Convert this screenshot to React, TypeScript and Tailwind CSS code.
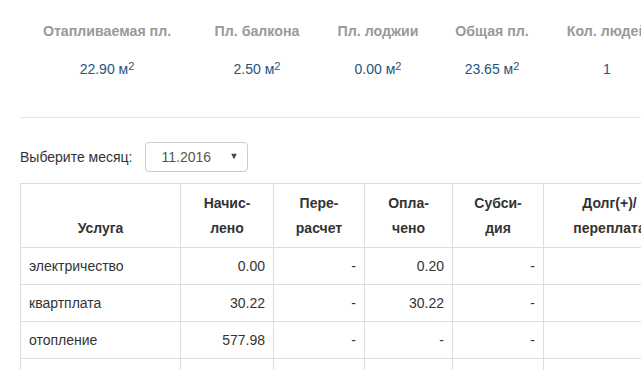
import React from "react";

export default function App() {
  const stats = [
    { label: "Отапливаемая пл.", value: "22.90", unit: true, w: "w-[174px]" },
    { label: "Пл. балкона", value: "2.50", unit: true, w: "w-[126px]" },
    { label: "Пл. лоджии", value: "0.00", unit: true, w: "w-[116px]" },
    { label: "Общая пл.", value: "23.65", unit: true, w: "w-[112px]" },
    { label: "Кол. людей", value: "1", unit: false, w: "w-[118px]" },
  ];

  const rows = [
    ["электричество", "0.00", "-", "0.20", "-", ""],
    ["квартплата", "30.22", "-", "30.22", "-", ""],
    ["отопление", "577.98", "-", "-", "-", ""],
    ["", "", "", "", "", ""],
  ];

  return (
    <div className="w-[641px] h-[370px] overflow-hidden bg-white text-[14px] text-[#333] font-['Liberation_Sans',Arial,sans-serif]">
      <div className="w-[760px] pl-5 pt-[21px]">
        {/* Площади */}
        <div className="flex">
          {stats.map((s) => (
            <div key={s.label} className={`${s.w} shrink-0 text-center`}>
              <div className="leading-5 font-bold text-[14.2px] text-[#999] whitespace-nowrap">{s.label}</div>
              <div className="mt-[18px] leading-5 text-[#245580] whitespace-nowrap">
                {s.value}
                {s.unit && (
                  <>
                    {" м"}
                    <sup className="text-[11px] top-[-4.5px]">2</sup>
                  </>
                )}
              </div>
            </div>
          ))}
        </div>

        <hr className="mt-[38px] border-t border-[#e5e5e5]" />

        {/* Выбор месяца */}
        <div className="mt-6 flex items-center">
          <span className="leading-5 text-[#333]">Выберите месяц:</span>
          <div className="ml-3 flex h-[30px] w-[103px] items-center justify-between rounded-[4px] border border-[#ccc] pl-4 pr-[8px] text-[#555]">
            <span>11.2016</span>
            <span className="text-[9px] text-[#444]">▼</span>
          </div>
        </div>

        {/* Таблица начислений */}
        <table className="mt-[11px] table-fixed border-collapse">
          <colgroup>
            <col className="w-[160px]" />
            <col className="w-[93px]" />
            <col className="w-[91px]" />
            <col className="w-[88px]" />
            <col className="w-[91px]" />
            <col className="w-[132px]" />
          </colgroup>
          <thead>
            <tr>
              {[
                ["", "Услуга"],
                ["Начис-", "лено"],
                ["Пере-", "расчет"],
                ["Опла-", "чено"],
                ["Субси-", "дия"],
                ["Долг(+)/", "переплата"],
              ].map(([a, b], i) => (
                <th
                  key={i}
                  className="border border-[#ddd] px-2 pt-[7px] pb-[6px] align-bottom text-center font-bold leading-[25px] whitespace-nowrap"
                >
                  {a && <div>{a}</div>}
                  <div>{b}</div>
                </th>
              ))}
            </tr>
          </thead>
          <tbody>
            {rows.map((r, ri) => (
              <tr key={ri}>
                {r.map((c, ci) => (
                  <td
                    key={ci}
                    className={`border border-[#ddd] p-2 leading-5 h-[37px] ${ci === 0 ? "text-left" : "text-right"}`}
                  >
                    {c}
                  </td>
                ))}
              </tr>
            ))}
          </tbody>
        </table>
      </div>
    </div>
  );
}
